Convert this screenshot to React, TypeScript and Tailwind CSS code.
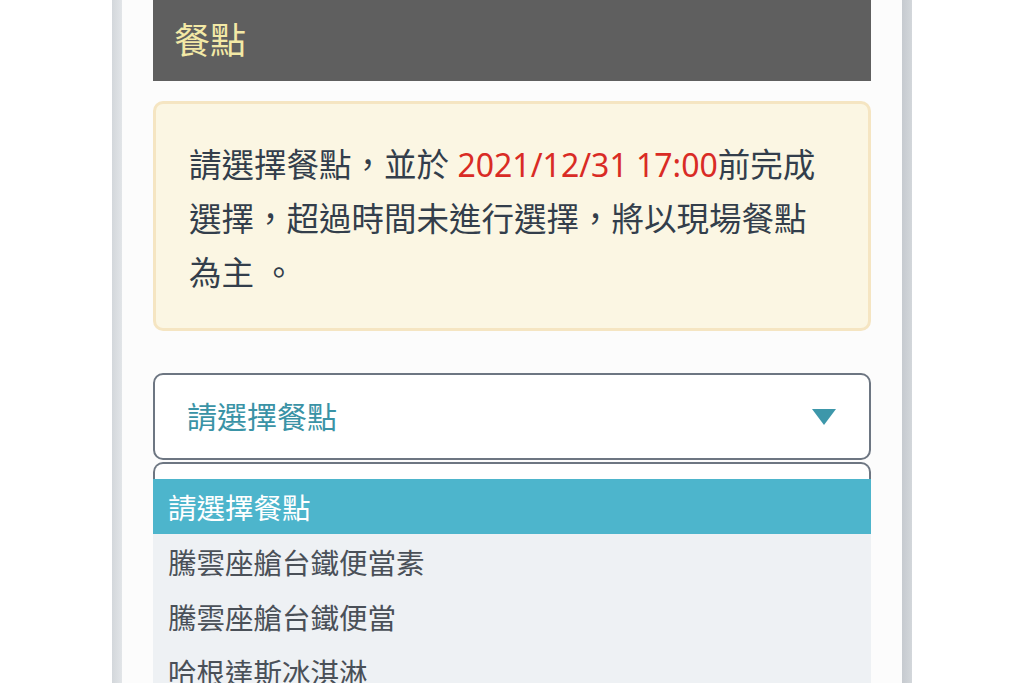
export default function App() {
  const options = ["騰雲座艙台鐵便當素", "騰雲座艙台鐵便當", "哈根達斯冰淇淋", "其他餐點"];
  return (
    <div className="h-[683px] w-[1024px] overflow-hidden bg-white flex justify-center font-['Noto_Sans','Noto_Sans_CJK_TC',sans-serif]">
      <div className="w-[10px] bg-gradient-to-r from-[#d3d7db] to-[#e2e5e8]" />
      <div className="w-[780px] bg-[#fcfcfc] px-[31px]">
        <div className="h-[81px] bg-[#5f5f5f] pl-[21px] flex items-center text-[36px] text-[#f3e9a6]">
          餐點
        </div>
        <div className="mt-[20px] h-[230px] rounded-[10px] border-[3px] border-[#f5e5c2] bg-[#fbf6e3] pl-[33px] pr-[38px] pt-[34px] text-[32.5px] leading-[54px] text-[#333e4b]">
          請選擇餐點，並於 <span className="text-[32px] text-[#d92b25]">2021/12/31 17:00</span>前完成選擇，超過時間未進行選擇，將以現場餐點為主 。
        </div>
        <div className="mt-[42px] h-[87px] rounded-[10px] border-2 border-[#6d7682] bg-white flex items-center justify-between pl-[32px] pr-[33px]">
          <span className="text-[30px] text-[#3a93a6]">請選擇餐點</span>
          <svg width="24" height="16" viewBox="0 0 24 16">
            <polygon points="0,0 24,0 12,16" fill="#3d97aa" />
          </svg>
        </div>
        <div className="mt-[2px] rounded-t-[10px] border-2 border-b-0 border-[#6d7682] bg-white pt-[15px]">
          <div className="-mx-[2px]">
            <div className="h-[55px] bg-[#4db5cc] pl-[15px] pt-[4px] flex items-center text-[28.5px] text-white">請選擇餐點</div>
            {options.map((o) => (
              <div key={o} className="h-[55px] bg-[#eef1f4] pl-[15px] pt-[4px] flex items-center text-[28.5px] text-[#4a5058]">
                {o}
              </div>
            ))}
          </div>
        </div>
      </div>
      <div className="w-[10px] bg-gradient-to-r from-[#c6cacf] to-[#d3d7db]" />
    </div>
  );
}
